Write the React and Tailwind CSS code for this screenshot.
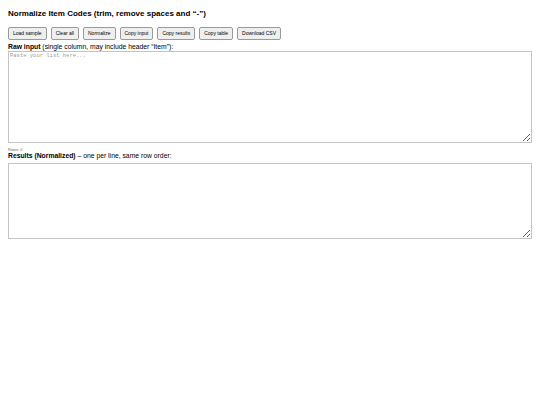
import React, { useState } from 'react';

const buttons = ['Load sample', 'Clear all', 'Normalize', 'Copy input', 'Copy results', 'Copy table', 'Download CSV'];

export default function App() {
  const [raw, setRaw] = useState('');
  const [out, setOut] = useState('');

  return (
    <div className="min-h-screen bg-white px-2 pt-2 text-black" style={{ fontFamily: '"Liberation Sans", Arial, sans-serif' }}>
      {/* header */}
      <h1 className="mt-[1px] text-[8px] font-bold leading-[10px]">
        Normalize Item Codes (trim, remove spaces and “-”)
      </h1>

      {/* toolbar */}
      <div className="mt-[8px] flex gap-[4px]">
        {buttons.map((b) => (
          <button
            key={b}
            className="h-[13px] rounded-[2px] border border-[#9a9a9a] bg-[#efefef] px-[4px] text-[5px] leading-none text-black"
          >
            {b}
          </button>
        ))}
      </div>

      {/* raw input */}
      <label className="mt-[3px] block text-[6.8px] leading-[8px]">
        <b>Raw input</b> (single column, may include header “Item”):
      </label>
      <textarea
        value={raw}
        onChange={(e) => setRaw(e.target.value)}
        placeholder="Paste your list here..."
        className="block h-[92px] w-[524px] border border-[#c4c4c4] px-[1px] text-[5.5px] leading-[7px] placeholder:text-[#9a9a9a]"
        style={{ fontFamily: '"Liberation Mono", monospace' }}
      />

      <div className="mt-[4px] text-[4px] leading-[5px] text-[#666]">Rows: 0</div>
      <label className="block text-[6.8px] leading-[8px]">
        <b>Results (Normalized)</b> – one per line, same row order:
      </label>
      <textarea
        value={out}
        onChange={(e) => setOut(e.target.value)}
        className="mt-[3px] block h-[76px] w-[524px] border border-[#c4c4c4] text-[5.5px]"
        style={{ fontFamily: '"Liberation Mono", monospace' }}
      />
    </div>
  );
}
